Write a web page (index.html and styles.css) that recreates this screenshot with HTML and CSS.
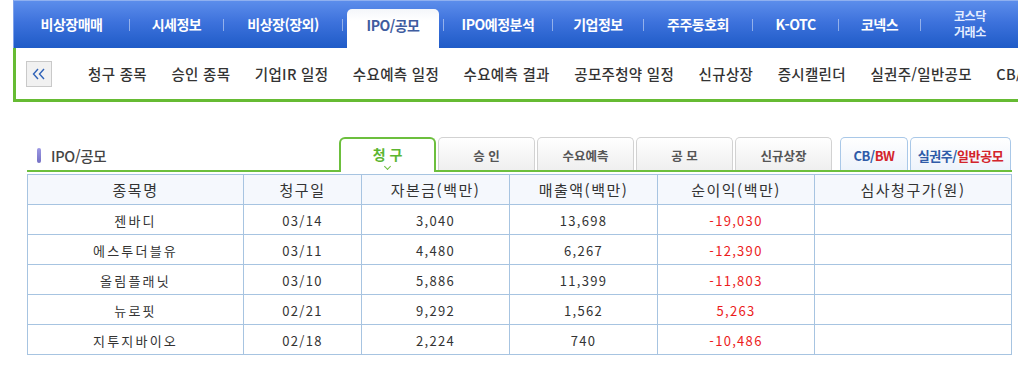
FILE: index.html
```html
<!DOCTYPE html>
<html lang="ko">
<head>
<meta charset="utf-8">
<title>IPO/공모</title>
<link rel="stylesheet" href="styles.css">
</head>
<body>
<header class="top">
  <nav class="gnb">
    <a class="gnb-item">비상장매매</a><span class="sep"></span>
    <a class="gnb-item">시세정보</a><span class="sep"></span>
    <a class="gnb-item">비상장(장외)</a><span class="sep"></span>
    <a class="gnb-item is-active"><span class="gnb-tab">IPO/공모</span></a><span class="sep"></span>
    <a class="gnb-item">IPO예정분석</a><span class="sep"></span>
    <a class="gnb-item">기업정보</a><span class="sep"></span>
    <a class="gnb-item">주주동호회</a><span class="sep"></span>
    <a class="gnb-item">K-OTC</a><span class="sep"></span>
    <a class="gnb-item">코넥스</a><span class="sep"></span>
    <a class="gnb-item two-line"><span class="ln">코스닥</span><span class="ln">거래소</span></a>
  </nav>
  <div class="lnb">
    <button class="lnb-prev" type="button" aria-label="이전">
      <svg width="14" height="12" viewBox="0 0 14 12"><polyline points="6,1 1.5,6 6,11" fill="none" stroke="#2f62b8" stroke-width="1.4"/><polyline points="12,1 7.5,6 12,11" fill="none" stroke="#2f62b8" stroke-width="1.4"/></svg>
    </button>
    <ul class="lnb-list">
      <li>청구 종목</li>
      <li>승인 종목</li>
      <li>기업IR 일정</li>
      <li>수요예측 일정</li>
      <li>수요예측 결과</li>
      <li>공모주청약 일정</li>
      <li>신규상장</li>
      <li>증시캘린더</li>
      <li>실권주/일반공모</li>
      <li>CB/BW</li>
    </ul>
  </div>
</header>

<section class="ipo">
  <div class="ipo-head">
    <h2 class="ipo-title"><span class="bar"></span>IPO/공모</h2>
    <div class="tabs">
      <a class="tab is-on">청 구</a>
      <a class="tab">승 인</a>
      <a class="tab">수요예측</a>
      <a class="tab">공 모</a>
      <a class="tab">신규상장</a>
      <a class="tab tab-blue cbbw"><span class="b">CB/</span><span class="r">BW</span></a>
      <a class="tab tab-blue sil"><span class="b">실권주/</span><span class="r">일반공모</span></a>
    </div>
  </div>
  <table class="grid">
    <colgroup>
      <col class="c1"><col class="c2"><col class="c3"><col class="c4"><col class="c5"><col class="c6">
    </colgroup>
    <thead>
      <tr><th>종목명</th><th>청구일</th><th>자본금(백만)</th><th>매출액(백만)</th><th>순이익(백만)</th><th>심사청구가(원)</th></tr>
    </thead>
    <tbody>
      <tr><td class="name">젠바디</td><td>03/14</td><td>3,040</td><td>13,698</td><td class="red">-19,030</td><td></td></tr>
      <tr><td class="name">에스투더블유</td><td>03/11</td><td>4,480</td><td>6,267</td><td class="red">-12,390</td><td></td></tr>
      <tr><td class="name">올림플래닛</td><td>03/10</td><td>5,886</td><td>11,399</td><td class="red">-11,803</td><td></td></tr>
      <tr><td class="name">뉴로핏</td><td>02/21</td><td>9,292</td><td>1,562</td><td class="red">5,263</td><td></td></tr>
      <tr><td class="name">지투지바이오</td><td>02/18</td><td>2,224</td><td>740</td><td class="red">-10,486</td><td></td></tr>
    </tbody>
  </table>
</section>
</body>
</html>
```

FILE: styles.css
```css
* { box-sizing: border-box; }
html, body { margin: 0; padding: 0; background: #fff; }
body {
  font-family: "Noto Sans CJK KR", "Noto Sans", sans-serif;
  color: #333;
  overflow: hidden;
}
a { text-decoration: none; color: inherit; }
ul { list-style: none; margin: 0; padding: 0; }
h2 { margin: 0; }

.top { margin-left: 13px; width: 1100px; }

/* ---------- GNB ---------- */
.gnb {
  display: flex;
  align-items: stretch;
  height: 48px;
  background: linear-gradient(#5c8deb 0%, #3d72dc 45%, #1f5bc7 100%);
  border-top: 1px solid #8fb0f0;
  border-left: 1px solid #7ea1ea;
}
.gnb-item {
  display: flex;
  align-items: center;
  justify-content: center;
  color: #fff;
  font-weight: 700;
  font-size: 14px;
  letter-spacing: -0.5px;
  padding-bottom: 1px;
}
.gnb-item:nth-child(1)  { width: 115px; }
.gnb-item:nth-child(3)  { width: 93px; }
.gnb-item:nth-child(5)  { width: 118px; }
.gnb-item:nth-child(7)  { width: 100px; align-items: flex-end; padding: 0 4px; }
.gnb-item:nth-child(9)  { width: 108px; }
.gnb-item:nth-child(11) { width: 90px; }
.gnb-item:nth-child(13) { width: 108px; }
.gnb-item:nth-child(15) { width: 85px; }
.gnb-item:nth-child(17) { width: 81px; }
.gnb-item:nth-child(19) { width: 98px; }
.gnb-item.two-line {
  flex-direction: column;
  font-size: 12px;
  line-height: 17px;
  color: #e4edff;
  letter-spacing: -0.3px;
  padding-bottom: 2px;
}
.ln { display: block; height: 16px; line-height: 16px; }
.sep {
  width: 1px;
  height: 12px;
  align-self: center;
  background: rgba(255, 255, 255, 0.45);
}
.gnb-tab {
  display: block;
  width: 100%;
  height: 39px;
  line-height: 32px;
  text-align: center;
  background: linear-gradient(#f4f6fa, #fff 30%);
  border-radius: 5px 5px 0 0;
  color: #3f5c9f;
}

/* ---------- LNB ---------- */
.lnb {
  display: flex;
  align-items: center;
  height: 54px;
  border-left: 3px solid #66bb33;
  border-bottom: 3px solid #66bb33;
  padding-left: 10px;
}
.lnb-prev {
  width: 26px;
  height: 26px;
  margin: 0;
  padding: 0;
  border: 1px solid #c9c9c9;
  background: #f1f1f1;
  display: flex;
  align-items: center;
  justify-content: center;
}
.lnb-list {
  display: flex;
  gap: 24.5px;
  margin-left: 36px;
  font-size: 14.5px;
  letter-spacing: 0.3px;
  font-weight: 500;
  color: #333;
  white-space: nowrap;
}

/* ---------- IPO section ---------- */
.ipo {
  margin: 35px 0 0 27px;
  width: 985px;
}
.ipo-head {
  display: flex;
  align-items: flex-end;
  height: 35px;
  border-bottom: 2px solid #6cbf3d;
}
.ipo-title {
  display: flex;
  align-items: center;
  gap: 10px;
  align-self: center;
  padding: 4px 0 0 10px;
  font-size: 14.5px;
  font-weight: 500;
  color: #444;
  letter-spacing: -0.3px;
}
.bar {
  width: 4px;
  height: 15px;
  border-radius: 2px;
  background: linear-gradient(#9d99e4, #7470c4);
}
.tabs {
  display: flex;
  align-items: flex-end;
  gap: 2px;
  margin-left: auto;
  margin-right: 1px;
  margin-bottom: -2px;
}
.tab {
  display: flex;
  align-items: center;
  justify-content: center;
  width: 97px;
  height: 33px;
  margin-bottom: 2px;
  border: 1px solid #d2d2d2;
  border-bottom: none;
  border-radius: 5px 5px 0 0;
  background: linear-gradient(#ffffff, #efefef);
  font-size: 12.5px;
  font-weight: 700;
  color: #555;
  padding-top: 2px;
}
.tab.is-on {
  position: relative;
  height: 35px;
  margin-bottom: 0;
  border: 2px solid #6cbf3d;
  border-bottom: none;
  border-radius: 6px 6px 0 0;
  background: #fff;
  color: #5cb531;
  font-size: 14px;
  padding: 0 0 4px;
}
.tab.is-on::after {
  content: "";
  position: absolute;
  left: 44px;
  bottom: 3px;
  width: 4px;
  height: 4px;
  border-right: 1.5px solid #6cbf3d;
  border-bottom: 1.5px solid #6cbf3d;
  transform: rotate(45deg);
}
.tab-blue {
  border-color: #a9c8e8;
  background: linear-gradient(#ffffff, #edf3fb);
  font-size: 13px;
  letter-spacing: -0.4px;
}
.tab.cbbw { width: 68px; margin-left: 6px; }
.tab.sil { width: 101px; }
.tab-blue .b { color: #2f5ba8; }
.tab-blue .r { color: #d3242b; }

/* ---------- Table ---------- */
.grid {
  margin-top: 2px;
  width: 985px;
  border-collapse: collapse;
  table-layout: fixed;
  border: 1px solid #a7c4e1;
}
.c1 { width: 216px; }
.c2 { width: 118px; }
.c3 { width: 148px; }
.c4 { width: 148px; }
.c5 { width: 157px; }
.c6 { width: 197px; }
.grid th, .grid td {
  border: 1px solid #a7c4e1;
  height: 30px;
  padding: 0;
  text-align: center;
  vertical-align: middle;
}
.grid th {
  background: #f5f8fd;
  font-size: 15px;
  font-weight: 400;
  color: #333;
  letter-spacing: 1.5px;
}
.grid td {
  font-size: 13px;
  color: #333;
  letter-spacing: 1.3px;
  padding-top: 2px;
}
.grid td.name { letter-spacing: 2.2px; }
.grid td.red { color: #ec1c1c; }
```
